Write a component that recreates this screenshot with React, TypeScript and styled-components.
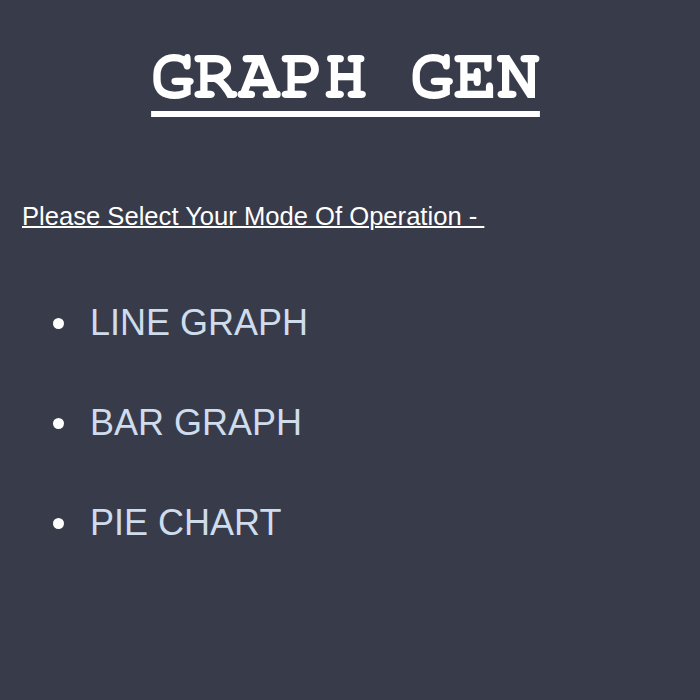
import React from "react";
import styled, { createGlobalStyle } from "styled-components";

const Global = createGlobalStyle`
  html, body { margin: 0; padding: 0; background: #383b4a; }
  body { min-height: 700px; }
`;

const Page = styled.div`
  min-height: 700px;
  background: #383b4a;
  padding: 0 22px;
  font-family: "Liberation Sans", Arial, sans-serif;
`;

const Header = styled.header`
  display: flex;
  justify-content: center;
  padding-top: 40px;
  margin-right: 9px;
`;

const Title = styled.h1`
  margin: 0;
  font-family: "FreeMono", "Courier New", monospace;
  font-weight: 700;
  font-size: 72px;
  line-height: 72px;
  color: #ffffff;
  text-decoration: underline;
  text-decoration-thickness: 6px;
  text-underline-offset: 13px;
`;

const Prompt = styled.p`
  margin: 90px 0 0 0;
  font-size: 25.6px;
  line-height: 28px;
  color: #ffffff;
  text-decoration: underline;
  text-decoration-thickness: 2px;
  white-space: pre;
`;

const Modes = styled.ul`
  margin: 72px 0 0 0;
  padding: 0 0 0 60px;
  display: flex;
  flex-direction: column;
  gap: 58px;
`;

const Mode = styled.li`
  font-size: 36px;
  line-height: 42px;
  color: #ffffff;
`;

const ModeLabel = styled.span`
  padding-left: 8px;
  color: #cfdcec;
`;

export default function App() {
  return (
    <>
      <Global />
      <Page>
        <Header>
          <Title>GRAPH GEN</Title>
        </Header>
        <Prompt>Please Select Your Mode Of Operation - </Prompt>
        <Modes>
          <Mode><ModeLabel>LINE GRAPH</ModeLabel></Mode>
          <Mode><ModeLabel>BAR GRAPH</ModeLabel></Mode>
          <Mode><ModeLabel>PIE CHART</ModeLabel></Mode>
        </Modes>
      </Page>
    </>
  );
}
